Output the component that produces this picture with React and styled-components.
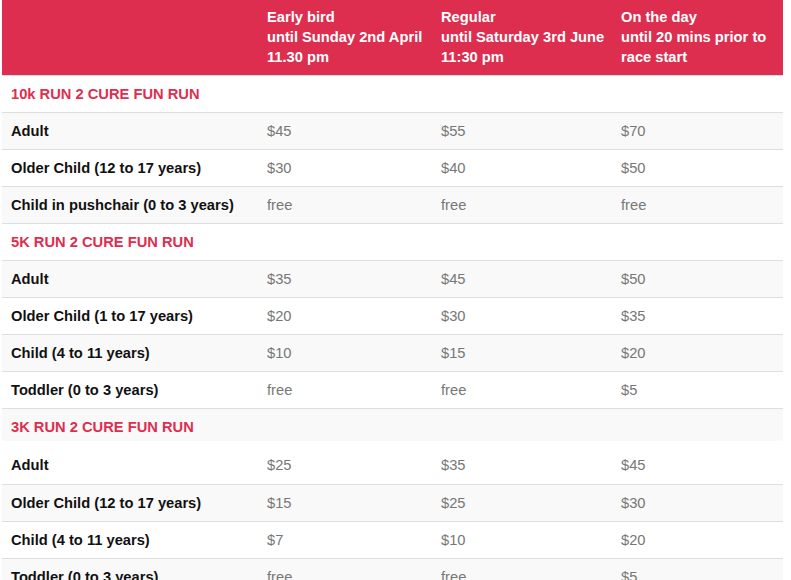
import React from "react";
import styled, { createGlobalStyle } from "styled-components";

const GlobalStyle = createGlobalStyle`
  body {
    margin: 0;
    background: #fff;
    font-family: "Liberation Sans", Arial, sans-serif;
  }
`;

const columns = [256, 174, 180, 171];

const mainSections = [
  {
    title: "10k RUN 2 CURE FUN RUN",
    rows: [
      ["Adult", "$45", "$55", "$70"],
      ["Older Child (12 to 17 years)", "$30", "$40", "$50"],
      ["Child in pushchair (0 to 3 years)", "free", "free", "free"],
    ],
  },
  {
    title: "5K RUN 2 CURE FUN RUN",
    rows: [
      ["Adult", "$35", "$45", "$50"],
      ["Older Child (1 to 17 years)", "$20", "$30", "$35"],
      ["Child (4 to 11 years)", "$10", "$15", "$20"],
      ["Toddler (0 to 3 years)", "free", "free", "$5"],
    ],
  },
];

const shortRows = [
  ["Adult", "$25", "$35", "$45"],
  ["Older Child (12 to 17 years)", "$15", "$25", "$30"],
  ["Child (4 to 11 years)", "$7", "$10", "$20"],
  ["Toddler (0 to 3 years)", "free", "free", "$5"],
];

const Cols = () => (
  <colgroup>
    {columns.map((w, i) => (
      <col key={i} style={{ width: w }} />
    ))}
  </colgroup>
);

const PriceRow = ({ row }) => (
  <Row>
    <Label>{row[0]}</Label>
    {row.slice(1).map((p, i) => (
      <Price key={i}>{p}</Price>
    ))}
  </Row>
);

const App = () => {
  return (
    <>
      <GlobalStyle />
      <Page>
        <Table>
          <Cols />
          <thead>
            <tr>
              <HeadCell />
              <HeadCell>
                Early bird
                <br />
                until Sunday 2nd April
                <br />
                11.30 pm
              </HeadCell>
              <HeadCell>
                Regular
                <br />
                until Saturday 3rd June
                <br />
                11:30 pm
              </HeadCell>
              <HeadCell>
                On the day
                <br />
                until 20 mins prior to
                <br />
                race start
              </HeadCell>
            </tr>
          </thead>
          <Body>
            {mainSections.map((s) => (
              <React.Fragment key={s.title}>
                <Row>
                  <SectionTitle colSpan={4}>{s.title}</SectionTitle>
                </Row>
                {s.rows.map((r, i) => (
                  <PriceRow key={i} row={r} />
                ))}
              </React.Fragment>
            ))}
            <Row>
              <SectionTitle colSpan={4} $last>
                3K RUN 2 CURE FUN RUN
              </SectionTitle>
            </Row>
          </Body>
        </Table>
        <ShortTable>
          <Cols />
          <Body $open>
            {shortRows.map((r, i) => (
              <PriceRow key={i} row={r} />
            ))}
          </Body>
        </ShortTable>
      </Page>
    </>
  );
};

export default App;

const Page = styled.div`
  padding: 0 8px 0 2px;
  font-size: 14.7px;
`;

const Table = styled.table`
  width: 781px;
  border-collapse: collapse;
  table-layout: fixed;
`;

const ShortTable = styled(Table)`
  width: 773px;
`;

const HeadCell = styled.th`
  background: #dd2e50;
  color: #fff;
  font-weight: 700;
  text-align: left;
  vertical-align: top;
  line-height: 20px;
  padding: 7px 9px 8px;
  white-space: nowrap;
`;

const Body = styled.tbody`
  tr:nth-child(even) {
    background: #f9f9f9;
  }
  tr:first-child td {
    border-top: ${(p) => (p.$open ? "none" : "1px solid #dedede")};
    padding-top: ${(p) => (p.$open ? "14px" : "8px")};
    padding-bottom: ${(p) => (p.$open ? "9px" : "8px")};
  }
`;

const Row = styled.tr``;

const Cell = styled.td`
  border-top: 1px solid #dedede;
  line-height: 20px;
  padding: 8px 9px 8px;
  text-align: left;
  vertical-align: top;
  white-space: nowrap;
`;

const Label = styled(Cell)`
  color: #111;
  font-weight: 700;
`;

const Price = styled(Cell)`
  color: #777;
`;

const SectionTitle = styled(Cell)`
  color: #dd2e50;
  font-weight: 700;
  padding-bottom: ${(p) => (p.$last ? "4px" : "8px")};
`;
